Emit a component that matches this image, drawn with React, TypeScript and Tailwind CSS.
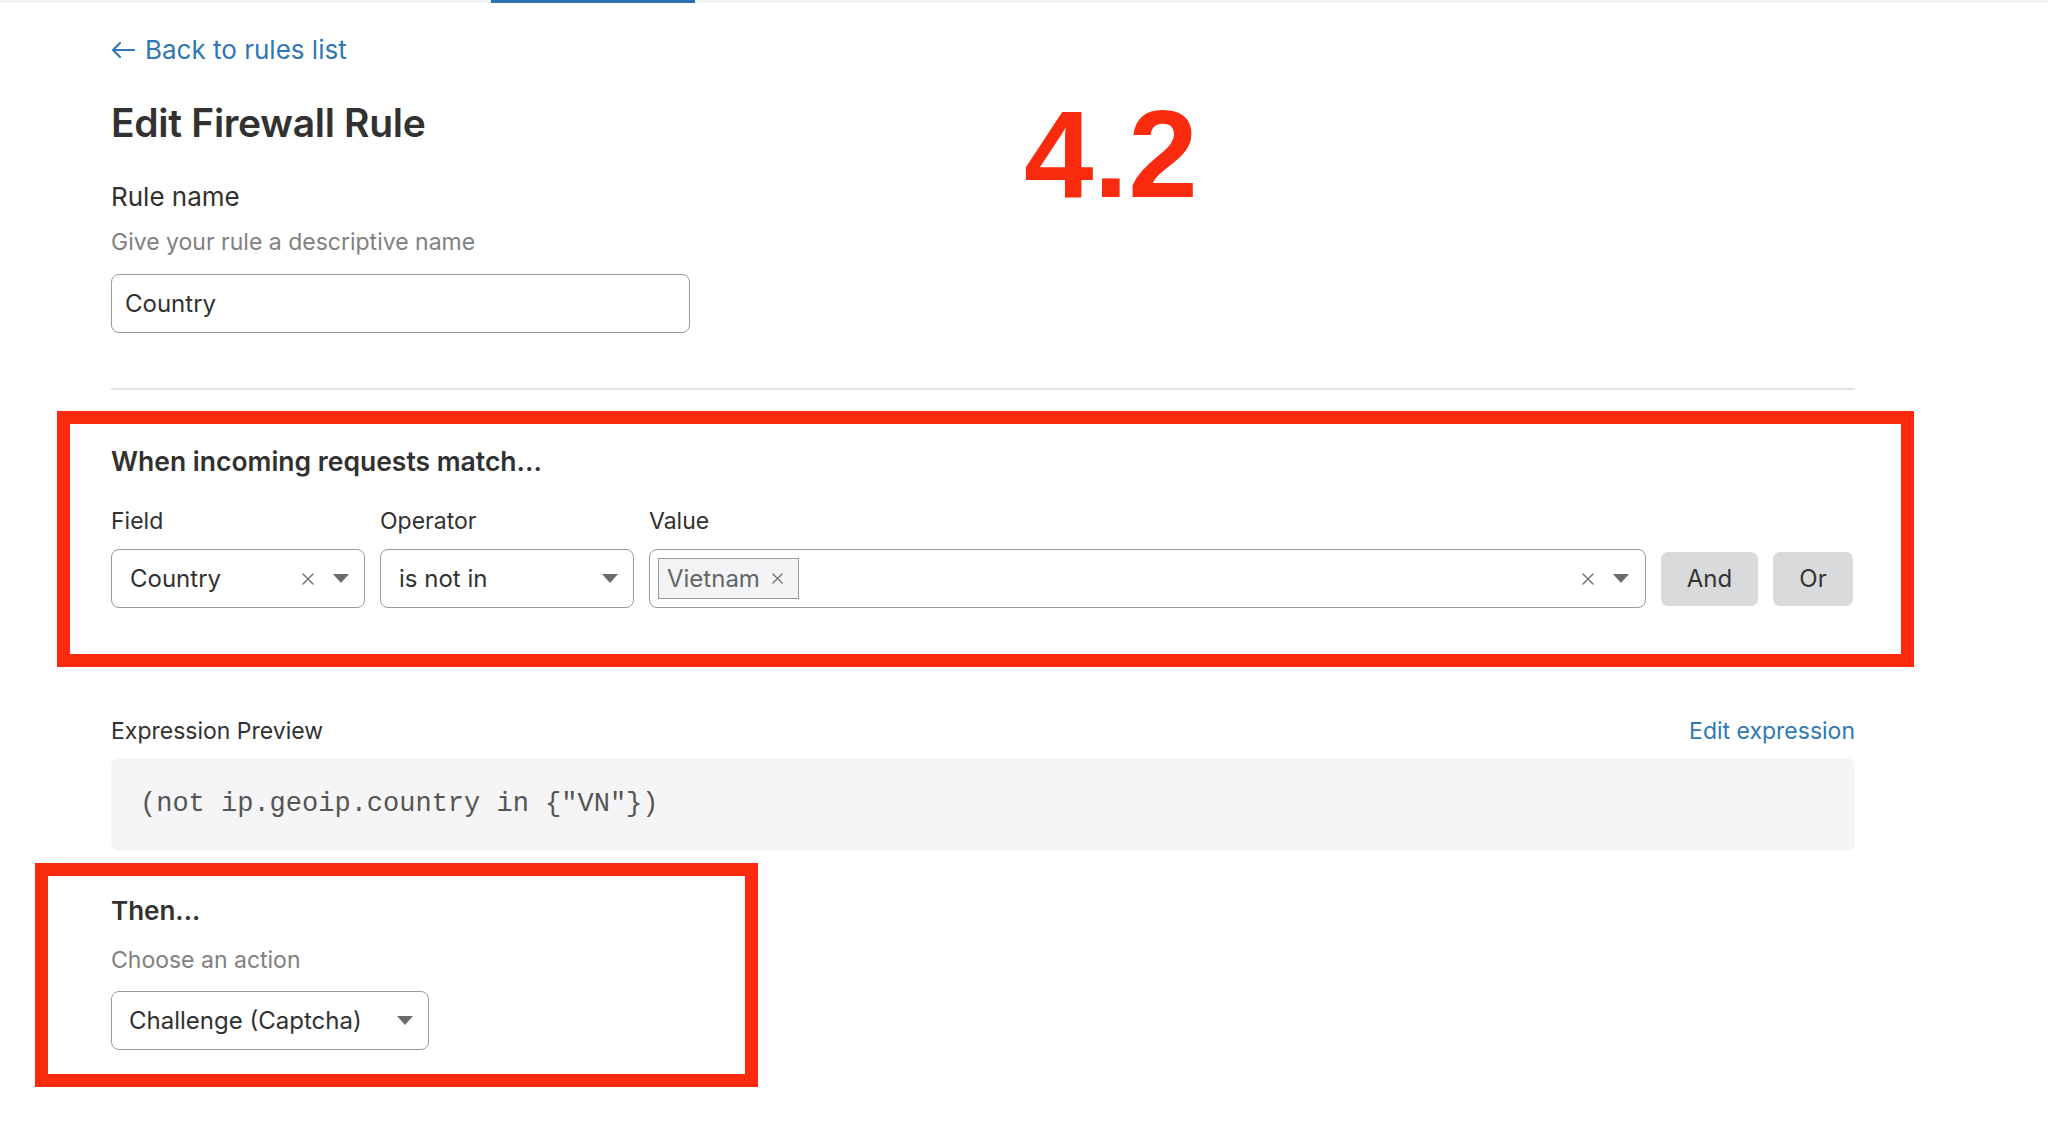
import React from "react";

const Caret = () => (
  <svg width="16" height="9" viewBox="0 0 16 9" className="shrink-0">
    <path d="M0 0 H16 L8 9 Z" fill="#6b6b6b" />
  </svg>
);

const Cross = ({ size = 12 }: { size?: number }) => (
  <svg width={size} height={size} viewBox="0 0 12 12" className="shrink-0">
    <path d="M1 1 L11 11 M11 1 L1 11" stroke="#777" strokeWidth="1.5" strokeLinecap="round" />
  </svg>
);

export default function App() {
  return (
    <div className="min-h-screen bg-white text-[#313131] font-['Inter',sans-serif]">
      {/* tab indicator */}
      <div className="h-[3px] bg-[#f4f4f4]">
        <div className="ml-[491px] w-[204px] h-[3px] bg-[#2c72b0]" />
      </div>

      <main className="relative pl-[111px] w-[1855px]">
        {/* annotation */}
        <div className="absolute left-[1024px] top-[57px] font-['Liberation_Sans',Arial,sans-serif] font-bold text-[125px] leading-none text-[#fa2a0f]">
          4.2
        </div>

        <a className="mt-[31px] flex items-center gap-[10px] h-[32px] text-[26px] leading-[32px] text-[#2f78b5]">
          <svg width="24" height="18" viewBox="0 0 24 18">
            <path d="M23 9 H2 M9 2 L2 9 L9 16" stroke="#2f78b5" strokeWidth="2.2" fill="none" strokeLinecap="round" strokeLinejoin="round" />
          </svg>
          Back to rules list
        </a>

        <h1 className="mt-[34px] text-[39px] leading-[46px] font-semibold tracking-[-0.3px]">Edit Firewall Rule</h1>

        <div className="mt-[35px] text-[26px] leading-[32px]">Rule name</div>
        <div className="mt-[14px] text-[23px] leading-[30px] text-[#808080]">Give your rule a descriptive name</div>
        <div className="mt-[17px] w-[579px] h-[59px] rounded-[8px] border-[1.5px] border-[#9b9b9b] flex items-center pl-[13px] text-[24px]">
          Country
        </div>

        <div className="mt-[55px] w-[1744px] h-[2px] bg-[#e2e2e2]" />

        {/* condition builder */}
        <section className="relative mt-[54px] w-[1744px]">
          <div className="absolute -top-[33px] -bottom-[59px] -left-[54px] -right-[59px] border-[13px] border-[#fa2a0f] pointer-events-none" />
          <h2 className="text-[26.5px] leading-[34px] font-semibold">When incoming requests match...</h2>
          <div className="mt-[28px] flex gap-[15px]">
            <div className="w-[254px] flex flex-col gap-[13px]">
              <span className="text-[23px] leading-[30px]">Field</span>
              <div className="h-[59px] rounded-[8px] border-[1.5px] border-[#9b9b9b] flex items-center pl-[18px] pr-[15px] text-[24px]">
                <span className="flex-1">Country</span>
                <span className="mr-[19px]"><Cross /></span>
                <Caret />
              </div>
            </div>
            <div className="w-[254px] flex flex-col gap-[13px]">
              <span className="text-[23px] leading-[30px]">Operator</span>
              <div className="h-[59px] rounded-[8px] border-[1.5px] border-[#9b9b9b] flex items-center pl-[18px] pr-[15px] text-[24px]">
                <span className="flex-1">is not in</span>
                <Caret />
              </div>
            </div>
            <div className="w-[997px] flex flex-col gap-[13px]">
              <span className="text-[23px] leading-[30px]">Value</span>
              <div className="h-[59px] rounded-[8px] border-[1.5px] border-[#9b9b9b] flex items-center pl-[8px] pr-[16px] text-[24px]">
                <span className="flex-1 flex">
                  <span className="h-[41px] w-[141px] border-[1.5px] border-[#9b9b9b] bg-[#f3f4f6] flex items-center pl-[8px] gap-[12px] text-[#666]">
                    Vietnam
                    <Cross size={11} />
                  </span>
                </span>
                <span className="mr-[19px]"><Cross /></span>
                <Caret />
              </div>
            </div>
            <div className="flex items-end gap-[15px] pb-[2px]">
              <button className="w-[97px] h-[54px] rounded-[7px] bg-[#d9dadc] text-[24px] text-[#333]">And</button>
              <button className="w-[80px] h-[54px] rounded-[7px] bg-[#d9dadc] text-[24px] text-[#333]">Or</button>
            </div>
          </div>
        </section>

        {/* expression preview */}
        <div className="mt-[108px] w-[1744px] flex items-center justify-between text-[23px] leading-[30px]">
          <span>Expression Preview</span>
          <a className="text-[#2f78b5]">Edit expression</a>
        </div>
        <div className="mt-[12px] w-[1744px] h-[93px] rounded-[8px] bg-[#f5f5f7] flex items-center pl-[29px] font-['Liberation_Mono','Courier_New',monospace] text-[27px] text-[#555]">
          (not ip.geoip.country in {"{"}"VN"{"}"})
        </div>

        {/* action */}
        <section className="relative mt-[44px] w-[318px]">
          <div className="absolute -top-[32px] -left-[76px] w-[723px] h-[224px] border-[13px] border-[#fa2a0f] pointer-events-none" />
          <h2 className="text-[26px] leading-[32px] font-semibold">Then...</h2>
          <div className="mt-[18px] text-[23px] leading-[30px] text-[#808080]">Choose an action</div>
          <div className="mt-[16px] h-[59px] rounded-[8px] border-[1.5px] border-[#9b9b9b] flex items-center pl-[17px] pr-[15px] text-[24px]">
            <span className="flex-1">Challenge (Captcha)</span>
            <Caret />
          </div>
        </section>
      </main>
    </div>
  );
}
